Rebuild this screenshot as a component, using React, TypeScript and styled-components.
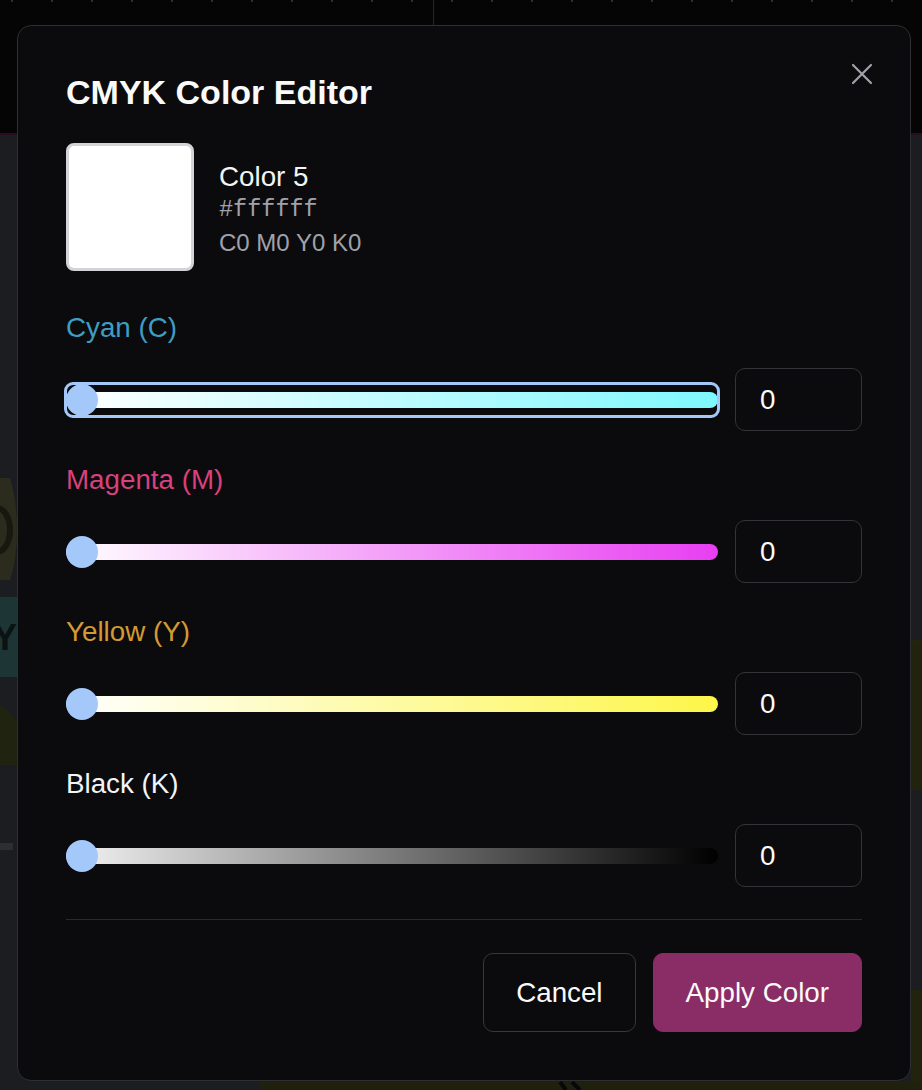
import React from "react";
import styled, { createGlobalStyle, css } from "styled-components";

const GlobalStyle = createGlobalStyle`
  html, body {
    margin: 0;
    padding: 0;
    overflow: hidden;
    background: #1c1d20;
  }
  body {
    font-family: "Liberation Sans", Arial, Helvetica, sans-serif;
  }
  *, *::before, *::after { box-sizing: border-box; }
`;

const Page = styled.div`
  position: relative;
  width: 922px;
  height: 1090px;
  overflow: hidden;
  display: flex;
  flex-direction: column;
  background: #1c1d20;
`;

const AppHeader = styled.header`
  height: 135px;
  flex-shrink: 0;
  display: flex;
  background-color: #050505;
  background-image: radial-gradient(circle at center, #2e2e30 0.9px, transparent 1.4px);
  background-size: 40px 4px;
  background-repeat: repeat-x;
  background-position: -8px -1px;
  border-bottom: 2px solid #2a0e20;
`;

const HeaderPane = styled.div<{ $w?: number }>`
  height: 100%;
  ${(p) => (p.$w ? `width: ${p.$w}px; border-right: 1px solid #25252a;` : "flex: 1;")}
`;

const AppBody = styled.main`
  flex: 1;
  background: #1c1d20;
`;

const Art = styled.svg`
  position: absolute;
  left: 0;
  top: 0;
  pointer-events: none;
`;

const Overlay = styled.div`
  position: absolute;
  inset: 0;
  display: flex;
  align-items: flex-start;
  padding: 25px 11px 0 17px;
`;

const Dialog = styled.section`
  position: relative;
  width: 894px;
  background: #0b0b0d;
  border: 1px solid #2e2e33;
  border-radius: 14px;
  padding: 48px;
  color: #fafafa;
`;

const CloseButton = styled.button`
  position: absolute;
  top: 30px;
  right: 30px;
  width: 36px;
  height: 36px;
  padding: 0;
  border: none;
  background: transparent;
  display: flex;
  align-items: center;
  justify-content: center;
  cursor: pointer;
`;

const Title = styled.h2`
  margin: 0 0 33px;
  font-size: 34px;
  line-height: 36px;
  font-weight: 700;
  color: #fafafa;
`;

const Preview = styled.div`
  display: flex;
  align-items: center;
  gap: 25px;
  margin-bottom: 41px;
`;

const Swatch = styled.div<{ $color: string }>`
  width: 128px;
  height: 128px;
  border: 3px solid #d4d4d8;
  border-radius: 8px;
  background: ${(p) => p.$color};
`;

const Info = styled.div`
  display: flex;
  flex-direction: column;
  margin-top: 4px;
`;

const Name = styled.div`
  font-size: 27.75px;
  line-height: 33px;
  color: #f4f4f5;
`;

const Meta = styled.div<{ $mono?: boolean }>`
  font-size: 24px;
  line-height: 33px;
  color: #a1a1aa;
  ${(p) =>
    p.$mono &&
    css`
      font-family: "Liberation Mono", "DejaVu Sans Mono", monospace;
      font-size: 23.5px;
    `}
`;

const Channels = styled.div`
  display: flex;
  flex-direction: column;
  gap: 33px;
`;

const Channel = styled.div`
  display: flex;
  flex-direction: column;
`;

const Label = styled.label<{ $color: string }>`
  font-size: 27.75px;
  line-height: 32px;
  margin-bottom: 24px;
  color: ${(p) => p.$color};
`;

const Row = styled.div`
  display: flex;
  align-items: center;
  gap: 17px;
  height: 63px;
`;

const SliderBox = styled.div<{ $focused?: boolean }>`
  position: relative;
  flex: 1;
  height: 32px;
  display: flex;
  align-items: center;
  border-radius: 7px;
  ${(p) =>
    p.$focused &&
    css`
      outline: 3px solid #a4c8fa;
      outline-offset: -1px;
    `}
`;

const Track = styled.div<{ $from: string; $to: string }>`
  width: 100%;
  height: 16px;
  border-radius: 8px;
  background: linear-gradient(to right, ${(p) => p.$from}, ${(p) => p.$to});
`;

const Thumb = styled.div`
  position: absolute;
  left: 0;
  top: 0;
  width: 32px;
  height: 32px;
  border-radius: 50%;
  background: #a5c8fb;
`;

const NumberInput = styled.input`
  width: 127px;
  height: 63px;
  flex-shrink: 0;
  padding: 0 24px;
  border: 1px solid #333338;
  border-radius: 10px;
  background: transparent;
  color: #fafafa;
  font-family: inherit;
  font-size: 27.75px;
  outline: none;
`;

const Divider = styled.hr`
  height: 1px;
  border: none;
  background: #2a2a2e;
  margin: 32px 0 33px;
`;

const Actions = styled.div`
  display: flex;
  justify-content: flex-end;
  gap: 17px;
`;

const Button = styled.button<{ $primary?: boolean }>`
  height: 79px;
  padding: 0 32px;
  border-radius: 10px;
  font-family: inherit;
  font-size: 27.75px;
  cursor: pointer;
  color: #fafafa;
  ${(p) =>
    p.$primary
      ? css`
          background: #8a2d67;
          border: 1px solid #8a2d67;
        `
      : css`
          background: transparent;
          border: 1px solid #38383c;
        `}
`;

type ChannelDef = {
  key: string;
  label: string;
  color: string;
  from: string;
  to: string;
  focused?: boolean;
};

const channels: ChannelDef[] = [
  { key: "c", label: "Cyan (C)", color: "#3f9dc4", from: "#ffffff", to: "#7ef8ff", focused: true },
  { key: "m", label: "Magenta (M)", color: "#d9407c", from: "#ffffff", to: "#e83ef2" },
  { key: "y", label: "Yellow (Y)", color: "#d49a31", from: "#ffffff", to: "#fdf64a" },
  { key: "k", label: "Black (K)", color: "#f4f4f5", from: "#f4f4f4", to: "#000000" },
];

function CloseIcon() {
  return (
    <svg width="36" height="36" viewBox="0 0 36 36" fill="none">
      <path
        d="M9 9 L27 27 M27 9 L9 27"
        stroke="#a1a1aa"
        strokeWidth="2.2"
        strokeLinecap="round"
      />
    </svg>
  );
}

function Backdrop() {
  return (
    <Art width="922" height="1090" viewBox="0 0 922 1090">
      <path d="M0 478 H10 Q17 500 17 530 Q17 560 10 580 H0 Z" fill="#2b2c1d" />
      <ellipse cx="-3" cy="530" rx="13" ry="22" fill="none" stroke="#18180f" strokeWidth="6" />
      <rect x="0" y="597" width="17" height="80" fill="#1d3535" />
      <text x="-7" y="650" fontFamily="Liberation Sans, sans-serif" fontWeight="700" fontSize="36" fill="#0c1212">
        Y
      </text>
      <path d="M0 705 Q12 712 17 722 V765 H0 Z" fill="#20230f" />
      <rect x="0" y="843" width="13" height="7" fill="#2d2e31" />
      <path d="M911 640 Q918 700 922 790 V640 Z" fill="#22240f" />
      <rect x="911" y="645" width="11" height="145" fill="#21230f" />
      <rect x="911" y="990" width="11" height="100" fill="#21230f" />
      <rect x="259" y="1082" width="663" height="8" fill="#1f210e" />
      <path d="M560 1082 L566 1090 M572 1082 L580 1090" stroke="#08080a" strokeWidth="4" />
    </Art>
  );
}

export default function App() {
  return (
    <>
      <GlobalStyle />
      <Page>
        <AppHeader>
          <HeaderPane $w={434} />
          <HeaderPane />
        </AppHeader>
        <AppBody />
        <Backdrop />
        <Overlay>
          <Dialog role="dialog" aria-labelledby="cmyk-title">
            <CloseButton aria-label="Close">
              <CloseIcon />
            </CloseButton>
            <Title id="cmyk-title">CMYK Color Editor</Title>
            <Preview>
              <Swatch $color="#ffffff" />
              <Info>
                <Name>Color 5</Name>
                <Meta $mono>#ffffff</Meta>
                <Meta>C0 M0 Y0 K0</Meta>
              </Info>
            </Preview>
            <Channels>
              {channels.map((ch) => (
                <Channel key={ch.key}>
                  <Label $color={ch.color}>{ch.label}</Label>
                  <Row>
                    <SliderBox $focused={ch.focused}>
                      <Track $from={ch.from} $to={ch.to} />
                      <Thumb />
                    </SliderBox>
                    <NumberInput type="text" inputMode="numeric" defaultValue="0" />
                  </Row>
                </Channel>
              ))}
            </Channels>
            <Divider />
            <Actions>
              <Button>Cancel</Button>
              <Button $primary>Apply Color</Button>
            </Actions>
          </Dialog>
        </Overlay>
      </Page>
    </>
  );
}
